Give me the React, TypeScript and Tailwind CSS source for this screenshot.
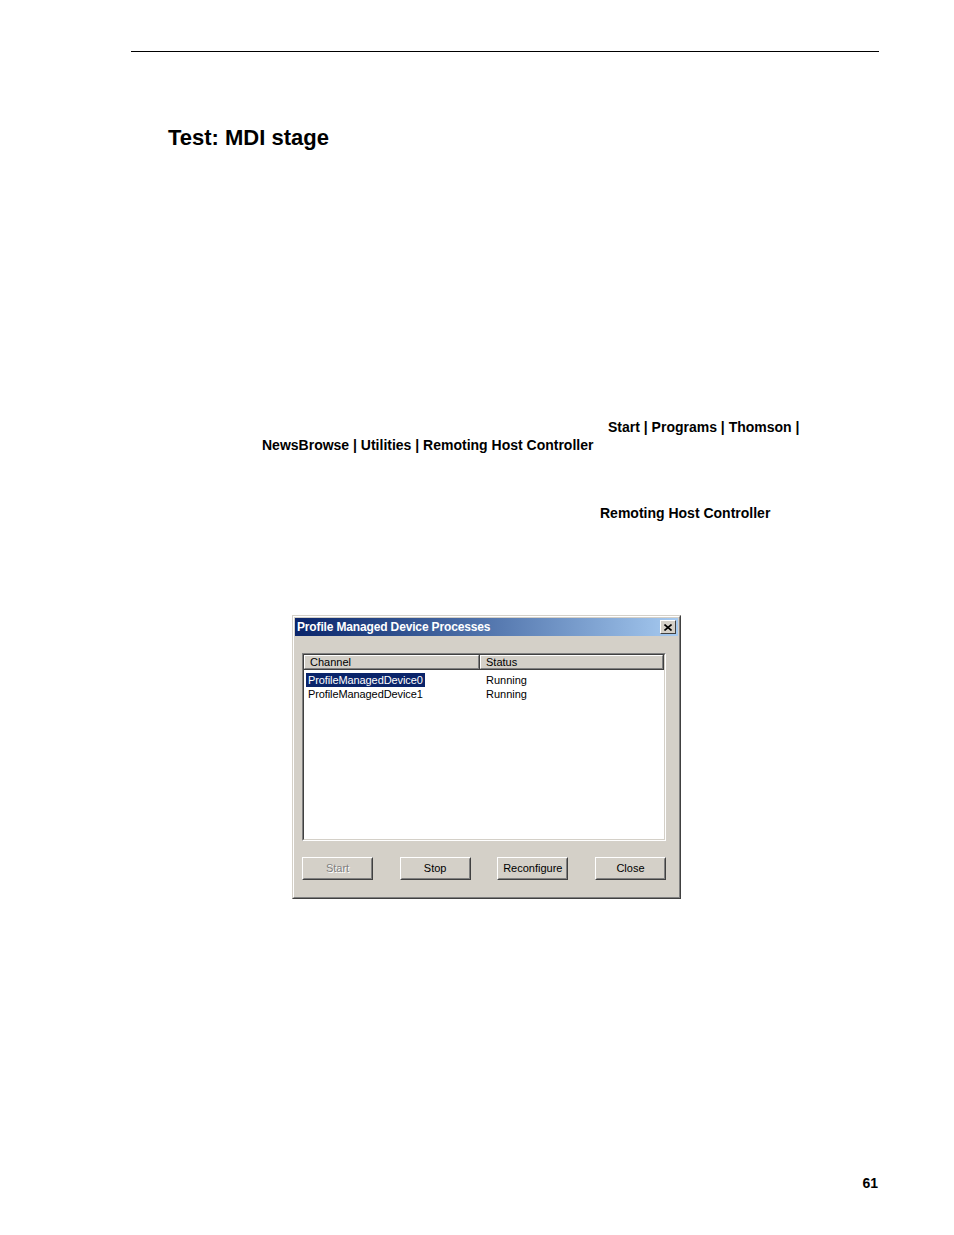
import React from "react";

const rows = [
  { name: "ProfileManagedDevice0", status: "Running", selected: true },
  { name: "ProfileManagedDevice1", status: "Running", selected: false },
];

function WinButton({ label, disabled }: { label: string; disabled?: boolean }) {
  return (
    <div className="w-[71px] h-[23px] border border-t-white border-l-white border-r-[#404040] border-b-[#404040] bg-[#d4d0c8]">
      <div className="w-full h-full border border-t-[#d4d0c8] border-l-[#d4d0c8] border-r-[#808080] border-b-[#808080] flex items-center justify-center">
        <span
          className={`text-[11px] leading-none ${
            disabled ? "text-[#808080] [text-shadow:1px_1px_0_#ffffff]" : "text-black"
          }`}
        >
          {label}
        </span>
      </div>
    </div>
  );
}

function Dialog() {
  return (
    <div className="ml-[292px] w-[389px] h-[284px] border border-t-[#d4d0c8] border-l-[#d4d0c8] border-r-[#404040] border-b-[#404040] bg-[#d4d0c8]">
      <div className="w-full h-full border border-t-white border-l-white border-r-[#808080] border-b-[#808080] p-px">
        {/* Title bar */}
        <div className="h-[18px] flex items-center justify-between bg-gradient-to-r from-[#0a246a] to-[#a6caf0]">
          <span className="pl-[2px] text-[12px] font-bold text-white leading-none tracking-[-0.15px]">
            Profile Managed Device Processes
          </span>
          <div className="mr-[2px] w-[16px] h-[14px] bg-[#d4d0c8] border border-t-white border-l-white border-r-[#404040] border-b-[#404040] flex items-center justify-center">
            <svg width="8" height="7" viewBox="0 0 8 7">
              <path d="M0.5 0.5 L7.5 6.5 M7.5 0.5 L0.5 6.5" stroke="#000" strokeWidth="1.6" />
            </svg>
          </div>
        </div>

        {/* List view */}
        <div className="mt-[17px] ml-[7px] w-[364px] h-[188px] border border-t-[#808080] border-l-[#808080] border-r-white border-b-white">
          <div className="w-full h-full border border-t-[#404040] border-l-[#404040] border-r-[#d4d0c8] border-b-[#d4d0c8] bg-white">
            <div className="flex h-[15px]">
              <div className="w-[176px] h-full bg-[#d4d0c8] border-r border-b border-r-[#404040] border-b-[#404040]">
                <div className="h-full border-t border-l border-r border-b border-t-white border-l-white border-r-[#808080] border-b-[#808080] flex items-center pl-[5px] text-[11px] leading-none text-black">
                  Channel
                </div>
              </div>
              <div className="flex-1 h-full bg-[#d4d0c8] border-r border-b border-r-[#404040] border-b-[#404040]">
                <div className="h-full border-t border-l border-r border-b border-t-white border-l-white border-r-[#808080] border-b-[#808080] flex items-center pl-[5px] text-[11px] leading-none text-black">
                  Status
                </div>
              </div>
            </div>
            <div className="pt-[3px]">
              {rows.map((r) => (
                <div key={r.name} className="flex h-[14px] items-center text-[11px] leading-none">
                  <div className="w-[176px] pl-[2px]">
                    <span
                      className={`inline-flex items-center h-[14px] px-[2px] tracking-[-0.1px] ${
                        r.selected ? "bg-[#0a246a] text-white" : "text-black"
                      }`}
                    >
                      {r.name}
                    </span>
                  </div>
                  <div className="pl-[6px] text-black">{r.status}</div>
                </div>
              ))}
            </div>
          </div>
        </div>

        {/* Buttons */}
        <div className="mt-[16px] ml-[7px] w-[364px] flex justify-between">
          <WinButton label="Start" disabled />
          <WinButton label="Stop" />
          <WinButton label="Reconfigure" />
          <WinButton label="Close" />
        </div>
      </div>
    </div>
  );
}

export default function App() {
  return (
    <div className="w-[954px] h-[1235px] bg-white font-['Liberation_Sans',Arial,sans-serif] text-black pt-[51px]">
      <div className="ml-[131px] w-[748px] h-px bg-black" />

      <h1 className="mt-[75px] ml-[168px] text-[22px] font-bold leading-none h-[22px]">Test: MDI stage</h1>

      <div className="mt-[271px] ml-[608px] text-[14px] font-bold leading-none h-[14px]">
        Start | Programs | Thomson |
      </div>
      <div className="mt-[4px] ml-[262px] text-[14px] font-bold leading-none h-[14px]">
        NewsBrowse | Utilities | Remoting Host Controller
      </div>
      <div className="mt-[54px] ml-[600px] text-[14px] font-bold leading-none h-[14px]">
        Remoting Host Controller
      </div>

      <div className="mt-[95px]">
        <Dialog />
      </div>

      <div className="mt-[277px] flex justify-end pr-[76px]">
        <span className="text-[14px] font-bold leading-none">61</span>
      </div>
    </div>
  );
}
